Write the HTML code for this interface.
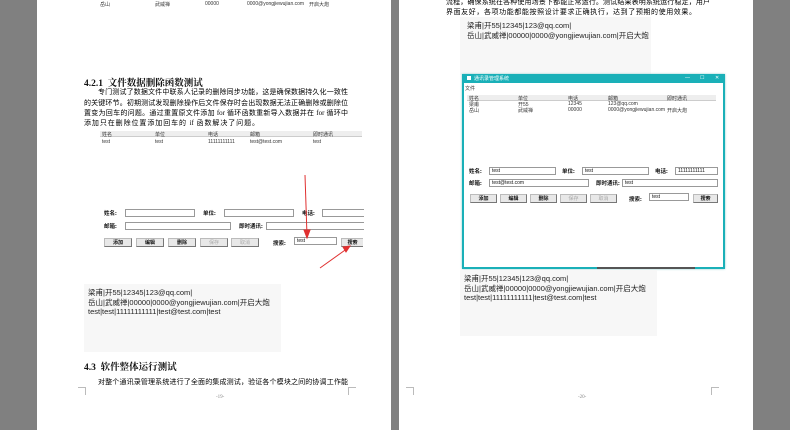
<!DOCTYPE html>
<html><head><meta charset="utf-8"><style>
*{margin:0;padding:0;box-sizing:border-box}
body{width:790px;height:430px;background:#808080;position:relative;overflow:hidden;font-family:"Liberation Serif","Noto Serif CJK SC",serif;color:#111}
.pg{position:absolute;top:0;height:430px;background:#fff}
.a{position:absolute;white-space:nowrap}
.t{font-family:"Liberation Sans","Noto Sans CJK SC",sans-serif;font-size:5px;color:#333}
.h{font-weight:bold;font-size:9.5px;font-family:"Liberation Serif","Noto Serif CJK SC",serif}
.ln{position:absolute;height:11px;font-size:7px;line-height:11px;white-space:nowrap;text-align:justify;text-align-last:justify;font-family:"Liberation Serif","Noto Sans CJK SC",serif;overflow:hidden;color:#000}
.in{position:absolute;border:1px solid #999;background:#fff;height:8px;font-size:5px;font-family:"Liberation Sans",sans-serif;padding-left:2px;line-height:6px}
.bt{position:absolute;background:#e8e8e8;border:1px solid #bbb;border-right-color:#777;border-bottom-color:#777;height:9px;font-size:5px;font-weight:bold;text-align:center;line-height:7px;font-family:"Noto Sans CJK SC",sans-serif}
.dis{color:#aaa;font-weight:normal}
.lb{position:absolute;font-size:5.5px;font-weight:bold;font-family:"Noto Sans CJK SC",sans-serif}
.th{position:absolute;height:6px;background:#eee;border-bottom:1px solid #ccc}
.gb{position:absolute;background:#f7f7f7;font-family:"Liberation Sans","Noto Sans CJK SC",sans-serif;font-size:7.5px;line-height:9.5px;color:#222;padding:4px 0 0 4px}
.cm{position:absolute;width:8px;height:8px;border-color:#bbb;border-style:solid;border-width:0}
</style></head><body>
<div class="pg" style="left:37px;width:354px"></div>
<div class="pg" style="left:399px;width:354px"></div>

<!-- LEFT PAGE -->
<div class="a t" style="left:100px;top:1px">岳山</div>
<div class="a t" style="left:155px;top:1px">武威禅</div>
<div class="a t" style="left:205px;top:1px">00000</div>
<div class="a t" style="left:247px;top:1px">0000@yongjiewujian.com</div>
<div class="a t" style="left:309px;top:1px">开启大炮</div>

<div class="a h" style="left:84px;top:75px">4.2.1&nbsp; 文件数据删除函数测试</div>
<div class="ln" style="left:98px;top:87px;width:250px">专门测试了数据文件中联系人记录的删除同步功能，这是确保数据持久化一致性</div>
<div class="ln" style="left:84px;top:98px;width:264px">的关键环节。初期测试发现删除操作后文件保存时会出现数据无法正确删除或删除位</div>
<div class="ln" style="left:84px;top:108px;width:264px">置变为回车的问题。通过重置原文件添加 for 循环函数重新导入数据并在 for 循环中</div>
<div class="ln" style="left:84px;top:118px;width:175px">添加只在删除位置添加回车的 if 函数解决了问题。</div>

<div class="th" style="left:100px;top:131px;width:262px"></div>
<div class="a t" style="left:102px;top:131px">姓名</div><div class="a t" style="left:155px;top:131px">单位</div><div class="a t" style="left:208px;top:131px">电话</div><div class="a t" style="left:250px;top:131px">邮箱</div><div class="a t" style="left:313px;top:131px">即时通讯</div>
<div class="a t" style="left:102px;top:139px">test</div><div class="a t" style="left:155px;top:139px">test</div><div class="a t" style="left:208px;top:139px">11111111111</div><div class="a t" style="left:250px;top:139px">test@test.com</div><div class="a t" style="left:313px;top:139px">test</div>

<div class="lb" style="left:104px;top:209px">姓名:</div><div class="in" style="left:125px;top:209px;width:70px"></div>
<div class="lb" style="left:203px;top:209px">单位:</div><div class="in" style="left:224px;top:209px;width:70px"></div>
<div class="lb" style="left:302px;top:209px">电话:</div><div class="in" style="left:322px;top:209px;width:42px;border-right:none"></div>
<div class="lb" style="left:104px;top:222px">邮箱:</div><div class="in" style="left:125px;top:222px;width:106px"></div>
<div class="lb" style="left:239px;top:222px">即时通讯:</div><div class="in" style="left:266px;top:222px;width:98px;border-right:none"></div>
<div class="bt" style="left:104px;top:238px;width:28px">添加</div>
<div class="bt" style="left:136px;top:238px;width:28px">编辑</div>
<div class="bt" style="left:168px;top:238px;width:28px">删除</div>
<div class="bt dis" style="left:200px;top:238px;width:28px">保存</div>
<div class="bt dis" style="left:231px;top:238px;width:28px">取消</div>
<div class="lb" style="left:273px;top:239px">搜索:</div><div class="in" style="left:294px;top:237px;width:43px">test</div>
<div class="bt" style="left:341px;top:238px;width:22px;border-right:none">搜索</div>
<svg class="a" style="left:0;top:0" width="790" height="430"><g stroke="#e03030" stroke-width="1" fill="#e03030">
<line x1="305" y1="175" x2="307" y2="236"/><polygon points="304,230 310,230 307,238"/>
<line x1="320" y1="268" x2="348" y2="248"/><polygon points="343,247 350,246 346,252"/></g></svg>

<div class="gb" style="left:84px;top:284px;width:197px;height:68px">梁甫|开55|12345|123@qq.com|<br>岳山|武威禅|00000|0000@yongjiewujian.com|开启大炮<br>test|test|11111111111|test@test.com|test</div>

<div class="a h" style="left:84px;top:359px">4.3&nbsp; 软件整体运行测试</div>
<div class="ln" style="left:98px;top:377px;width:250px">对整个通讯录管理系统进行了全面的集成测试，验证各个模块之间的协调工作能</div>
<div class="cm" style="left:78px;top:387px;border-top-width:1px;border-right-width:1px"></div>
<div class="cm" style="left:348px;top:387px;border-top-width:1px;border-left-width:1px"></div>
<div class="a" style="left:216px;top:395px;font-size:5px;color:#888">-19-</div>

<!-- RIGHT PAGE -->
<div class="ln" style="left:446px;top:-3px;width:264px">流程，确保系统在各种使用场景下都能正常运行。测试结果表明系统运行稳定，用户</div>
<div class="ln" style="left:446px;top:7px;width:250px">界面友好，各项功能都能按照设计要求正确执行，达到了预期的使用效果。</div>
<div class="gb" style="left:460px;top:17px;width:191px;height:58px;padding-left:7px">梁甫|开55|12345|123@qq.com|<br>岳山|武威禅|00000|0000@yongjiewujian.com|开启大炮</div>

<div style="position:absolute;left:462px;top:74px;width:263px;height:195px;border:2px solid #1ab0b8;border-top:none;background:#fff;box-shadow:0 0 2px #8cc">
<div style="height:9px;background:#1ab0b8;position:relative"><div class="a" style="left:3px;top:2px;width:4px;height:4px;background:#fff"></div><div class="a t" style="left:10px;top:1px;color:#fff">通讯录管理系统</div><div class="a t" style="left:221px;top:1px;color:#fff">—</div><div class="a t" style="left:236px;top:1px;color:#fff">☐</div><div class="a t" style="left:251px;top:1px;color:#fff">✕</div></div>
</div>
<div class="a t" style="left:465px;top:85px">文件</div>
<div class="th" style="left:467px;top:95px;width:249px"></div>
<div class="a t" style="left:469px;top:95px">姓名</div><div class="a t" style="left:518px;top:95px">单位</div><div class="a t" style="left:568px;top:95px">电话</div><div class="a t" style="left:608px;top:95px">邮箱</div><div class="a t" style="left:667px;top:95px">即时通讯</div>
<div class="a t" style="left:469px;top:101px">梁甫</div><div class="a t" style="left:518px;top:101px">开55</div><div class="a t" style="left:568px;top:101px">12345</div><div class="a t" style="left:608px;top:101px">123@qq.com</div>
<div class="a t" style="left:469px;top:107px">岳山</div><div class="a t" style="left:518px;top:107px">武威禅</div><div class="a t" style="left:568px;top:107px">00000</div><div class="a t" style="left:608px;top:107px">0000@yongjiewujian.com</div><div class="a t" style="left:667px;top:107px">开启大炮</div>

<div class="lb" style="left:469px;top:167px">姓名:</div><div class="in" style="left:489px;top:167px;width:67px">test</div>
<div class="lb" style="left:562px;top:167px">单位:</div><div class="in" style="left:582px;top:167px;width:67px">test</div>
<div class="lb" style="left:655px;top:167px">电话:</div><div class="in" style="left:675px;top:167px;width:43px">11111111111</div>
<div class="lb" style="left:469px;top:179px">邮箱:</div><div class="in" style="left:489px;top:179px;width:100px">test@test.com</div>
<div class="lb" style="left:596px;top:179px">即时通讯:</div><div class="in" style="left:622px;top:179px;width:96px">test</div>
<div class="bt" style="left:470px;top:194px;width:27px">添加</div>
<div class="bt" style="left:500px;top:194px;width:27px">编辑</div>
<div class="bt" style="left:530px;top:194px;width:27px">删除</div>
<div class="bt dis" style="left:560px;top:194px;width:27px">保存</div>
<div class="bt dis" style="left:590px;top:194px;width:27px">取消</div>
<div class="lb" style="left:629px;top:195px">搜索:</div><div class="in" style="left:649px;top:193px;width:40px">test</div>
<div class="bt" style="left:693px;top:194px;width:25px">搜索</div>
<div class="a" style="left:597px;top:267px;width:98px;height:2px;background:#555"></div>

<div class="gb" style="left:460px;top:270px;width:197px;height:66px">梁甫|开55|12345|123@qq.com|<br>岳山|武威禅|00000|0000@yongjiewujian.com|开启大炮<br>test|test|11111111111|test@test.com|test</div>

<div class="cm" style="left:406px;top:387px;border-top-width:1px;border-right-width:1px"></div>
<div class="cm" style="left:711px;top:387px;border-top-width:1px;border-left-width:1px"></div>
<div class="a" style="left:578px;top:395px;font-size:5px;color:#888">-20-</div>
</body></html>
